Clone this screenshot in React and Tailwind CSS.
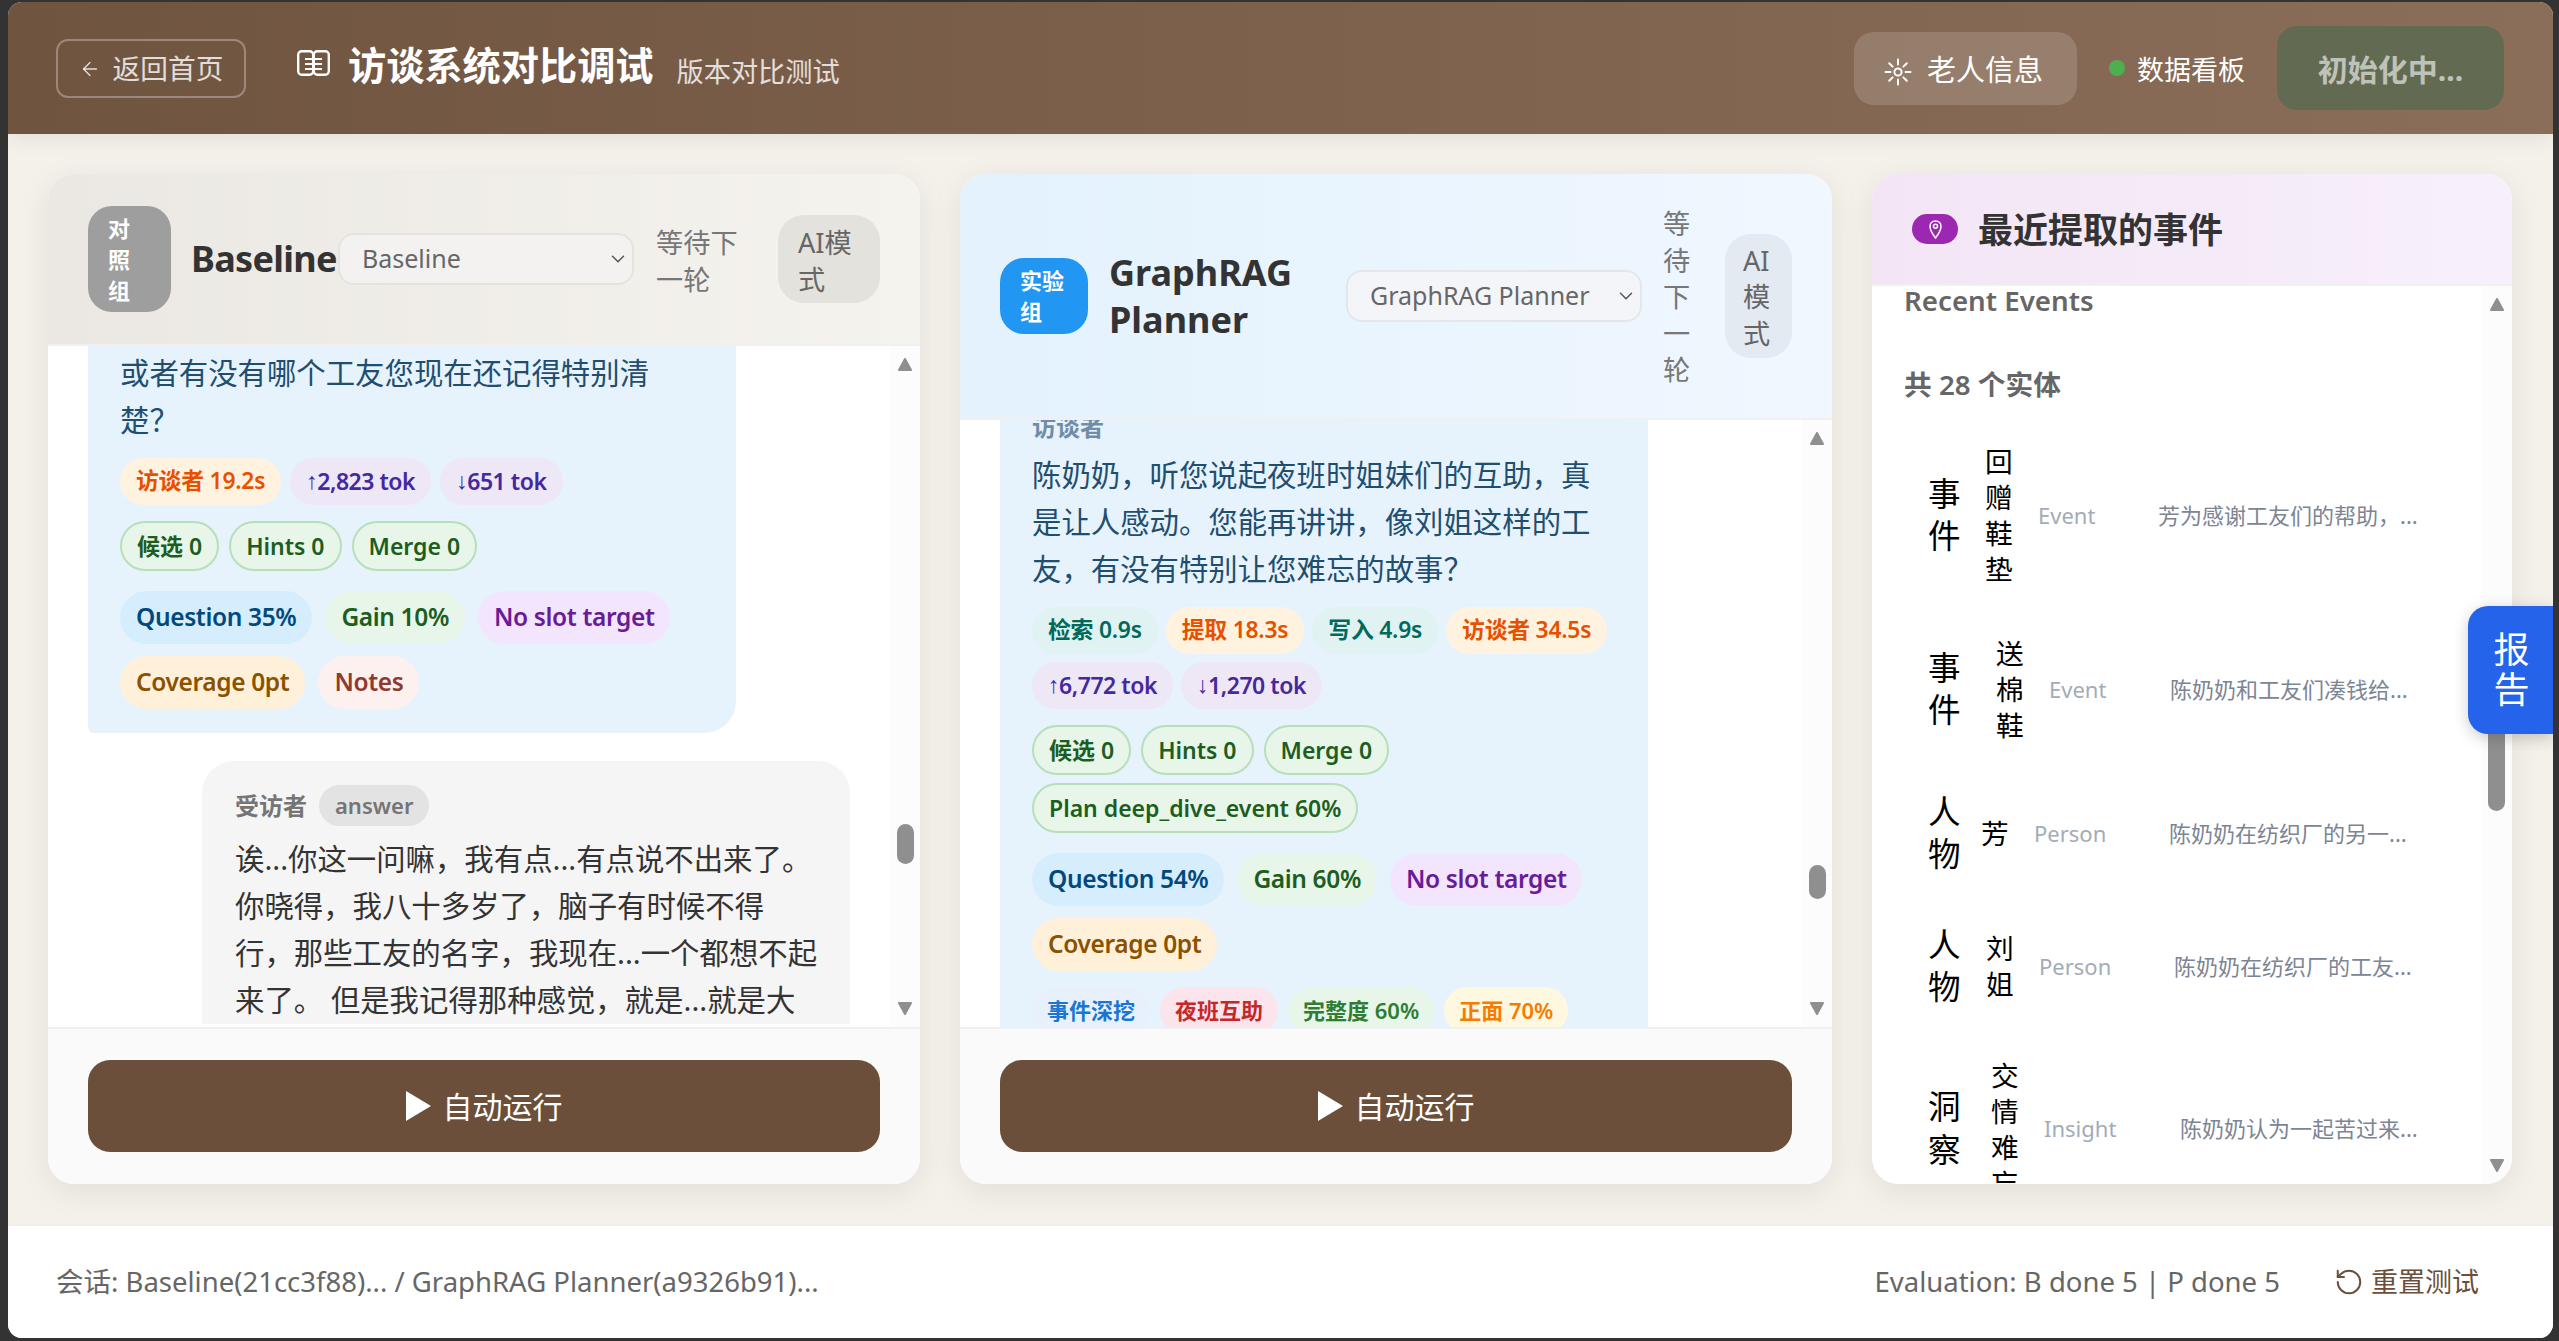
import React from "react";
import { ArrowLeft, ChevronDown, RotateCcw } from "lucide-react";

const chipColors = {
  fetch: "bg-[#e0f2f1] text-[#00695c]",
  extract: "bg-[#fff3e0] text-[#e65100]",
  tok: "bg-[#ede7f6] text-[#4527a0]",
  question: "bg-[#d6edfd] text-[#01497c]",
  gain: "bg-[#e8f5e9] text-[#1b5e20]",
  slot: "bg-[#f3e5fd] text-[#6a1b9a]",
  coverage: "bg-[#fff0d9] text-[#8a5200]",
  notes: "bg-[#fdf1ef] text-[#8f3a2f]",
};

const Chip = ({ color, children }) => (
  <span className={`flex h-[47px] items-center whitespace-nowrap rounded-full px-4 text-[22.85px] font-semibold tracking-[-0.01em] ${color}`}>
    {children}
  </span>
);

const TokChip = ({ arrow, children }) => (
  <span className={`flex h-[47px] items-center whitespace-nowrap rounded-full px-4 text-[23px] font-semibold tracking-[-0.02em] ${chipColors.tok}`}>
    <span className="font-['Liberation_Sans'] font-normal">{arrow}</span>
    {children}
  </span>
);

const HintChip = ({ children }) => (
  <span className="flex h-[50px] items-center whitespace-nowrap rounded-full border-2 border-[#b7dfba] bg-[#e8f5e9] px-[15px] text-[23px] font-semibold text-[#1b5e20]">
    {children}
  </span>
);

const ScoreChip = ({ color, children }) => (
  <span className={`flex h-[53px] items-center whitespace-nowrap rounded-full px-4 text-[24.5px] font-semibold tracking-[-0.015em] ${color}`}>
    {children}
  </span>
);

const TagChip = ({ color, children }) => (
  <span className={`flex h-[47px] items-center whitespace-nowrap rounded-full px-[15px] text-[22px] font-semibold ${color}`}>
    {children}
  </span>
);

const Arrow = ({ down }) => (
  <svg width="16" height="14" viewBox="0 0 16 14" className={down ? "rotate-180" : ""}>
    <path d="M8 1 L14 12 H2 Z" fill="#8f8f8f" stroke="#8f8f8f" strokeWidth="2" strokeLinejoin="round" />
  </svg>
);

// fake scrollbar, native ones don't show in the capture
const Scrollbar = ({ thumbClass }) => (
  <div className="absolute inset-y-0 right-0 w-[30px] bg-[#fcfcfc]">
    <div className="absolute left-[7px] top-[12px]">
      <Arrow />
    </div>
    <div className={`absolute w-[17px] rounded-full bg-[#8f8f8f] ${thumbClass}`} />
    <div className="absolute bottom-[12px] left-[7px]">
      <Arrow down />
    </div>
  </div>
);

const ModelSelect = ({ value, className }) => (
  <div className="relative ml-0.5 shrink-0">
    <select className={`h-[52px] w-[296px] appearance-none rounded-2xl border-2 pl-[22px] text-[25px] text-[#666] ${className}`}>
      <option>{value}</option>
    </select>
    <ChevronDown size={22} strokeWidth={1.6} className="pointer-events-none absolute right-[5px] top-[15px] text-[#555]" />
  </div>
);

const AutoRun = () => (
  <div className="shrink-0 border-t-2 border-[#f0f0f0] bg-[#fafafa] px-10 pb-8 pt-[31px]">
    <button className="flex h-[92px] w-full items-center justify-center gap-3 rounded-[22px] bg-[#6b4f3a] text-[30px] text-white">
      <svg width="25" height="30" viewBox="0 0 25 30">
        <path d="M0 0 L25 15 L0 30 Z" fill="white" />
      </svg>
      自动运行
    </button>
  </div>
);

const BookIcon = () => (
  <svg width="33" height="26" viewBox="0 0 33 26" fill="none" stroke="white" strokeWidth="2.4" className="mb-[10px] ml-[51px] shrink-0">
    <rect x="1.2" y="1.2" width="15" height="23.6" rx="3.5" />
    <rect x="16.8" y="1.2" width="15" height="23.6" rx="3.5" />
    <path d="M8 9h17M8 14h17M8 19h17" strokeWidth="2" />
  </svg>
);

const SunIcon = () => (
  <svg width="28" height="28" viewBox="0 0 28 28" fill="none" stroke="white" strokeWidth="2" strokeLinecap="round" className="mt-[4px]">
    <circle cx="14" cy="14" r="3.6" />
    <path d="M14 1.5v5M14 21.5v5M1.5 14h5M21.5 14h5M5.2 5.2l3.4 3.4M19.4 19.4l3.4 3.4M5.2 22.8l3.4-3.4M19.4 8.6l3.4-3.4" />
  </svg>
);

const PinIcon = () => (
  <svg width="13" height="19" viewBox="0 0 13 19" fill="none" stroke="white" strokeWidth="1.5">
    <path d="M6.5 1C3 1 1 3.5 1 6.4 1 10.5 6.5 18 6.5 18S12 10.5 12 6.4C12 3.5 10 1 6.5 1Z" />
    <circle cx="6.5" cy="6.2" r="2" />
  </svg>
);

const entities = [
  { type: "事件", name: "回赠鞋垫", en: "Event", desc: "芳为感谢工友们的帮助，...", nameGap: "ml-[24px]", enWidth: "w-[120px]" },
  { type: "事件", name: "送棉鞋", en: "Event", desc: "陈奶奶和工友们凑钱给...", nameGap: "ml-[35px]", enWidth: "w-[121px]" },
  { type: "人物", name: "芳", en: "Person", desc: "陈奶奶在纺织厂的另一...", nameGap: "ml-[20px]", enWidth: "w-[135px]" },
  { type: "人物", name: "刘姐", en: "Person", desc: "陈奶奶在纺织厂的工友...", nameGap: "ml-[25px]", enWidth: "w-[135px]" },
  { type: "洞察", name: "交情难忘", en: "Insight", desc: "陈奶奶认为一起苦过来...", nameGap: "ml-[30px]", enWidth: "w-[136px]" },
];

const EntityRow = ({ item }) => (
  <div className="flex items-center py-6 pl-[56px]">
    <div className="w-[33px] shrink-0 text-[32.6px] leading-[42.4px] text-black">{item.type}</div>
    <div className={`w-[28px] shrink-0 text-[27.7px] leading-[36px] text-black ${item.nameGap}`}>{item.name}</div>
    <div className={`ml-[25px] shrink-0 text-[22px] text-[#a3abb8] ${item.enWidth}`}>{item.en}</div>
    <div className="whitespace-nowrap text-[22px] text-[#7c8594]">{item.desc}</div>
  </div>
);

export default function App() {
  return (
    <div className="h-screen w-screen overflow-hidden bg-[#333333] pb-[3px] pl-2 pr-[6px] pt-[2px] font-['Noto_Sans','Noto_Sans_CJK_SC',sans-serif]">
      <div className="relative flex h-full flex-col overflow-hidden rounded-[14px] bg-[#f4f1ea]">
        {/* Top bar */}
        <header className="z-10 flex h-[132px] shrink-0 items-center bg-gradient-to-r from-[#6f5440] to-[#8b6e59] pl-12 pr-[49px] shadow-[0_4px_20px_rgba(0,0,0,0.08)]">
          <button className="flex h-[59px] w-[190px] items-center justify-center gap-3 rounded-xl border-2 border-white/30 pt-[2px] text-[27.7px] text-white/80">
            <ArrowLeft size={22} strokeWidth={1.5} />
            返回首页
          </button>
          <BookIcon />
          <h1 className="mb-[5px] ml-[18px] text-[38.2px] font-bold text-white">访谈系统对比调试</h1>
          <span className="ml-[23px] mt-2 text-[27.2px] text-white/80">版本对比测试</span>
          <div className="ml-auto flex items-center">
            <button className="flex h-[73px] w-[223px] items-center justify-center gap-[15px] rounded-[20px] bg-white/15 pr-1 pt-[4px] text-[29px] text-white">
              <SunIcon />
              老人信息
            </button>
            <span className="ml-8 h-4 w-4 rounded-full bg-[#4caf50]" />
            <span className="ml-3 pt-[4px] text-[27px] text-white">数据看板</span>
            <button className="ml-8 flex h-[84px] w-[227px] items-center justify-center rounded-[20px] bg-[#626b52] pt-[2px] text-[30px] font-bold text-white/60">
              初始化中...
            </button>
          </div>
        </header>

        <main className="grid min-h-0 flex-1 grid-cols-[872px_872px_1fr] gap-10 pb-[41px] pl-10 pr-[41px] pt-10">
          {/* Baseline column */}
          <section className="flex min-h-0 flex-col overflow-hidden rounded-[26px] bg-white shadow-[0_8px_32px_rgba(0,0,0,0.08)]">
            <div className="flex h-[172px] shrink-0 items-center border-b-2 border-[#f0f0f0] bg-gradient-to-r from-[#ebe8e3] to-[#f5f3ee] px-10">
              <div className="flex h-[106px] w-[83px] shrink-0 items-center rounded-[24px] bg-[#9e9e9e] px-5 text-[22px] font-bold leading-[31px] text-white">
                对照组
              </div>
              <h2 className="ml-5 w-[145px] shrink-0 text-[36px] font-bold tracking-[-0.02em] text-[#333]">Baseline</h2>
              <ModelSelect value="Baseline" className="border-[#e6e3df] bg-[#f3f2f0]" />
              <div className="ml-[22px] w-[100px] shrink-0 pt-[3px] text-[27.2px] leading-[37px] text-[#777]">等待下一轮</div>
              <div className="ml-[22px] flex h-[88px] w-[102px] shrink-0 items-center rounded-[26px] bg-[#e4e2dd] px-5 pt-[3px] text-[27.2px] leading-[37px] text-[#666]">
                AI模式
              </div>
            </div>

            <div className="relative min-h-0 flex-1 overflow-hidden">
              <div className="px-10">
                <div className="w-[648px] rounded-bl-md rounded-br-[32px] bg-[#e6f3fc] px-8 pb-6 pt-1">
                  <p className="text-[29.4px] leading-[47px] text-[#1f4e70]">或者有没有哪个工友您现在还记得特别清楚？</p>
                  <div className="mt-[14px] flex flex-wrap gap-x-[9px] gap-y-2">
                    <Chip color={chipColors.extract}>访谈者 19.2s</Chip>
                    <TokChip arrow="↑">2,823 tok</TokChip>
                    <TokChip arrow="↓">651 tok</TokChip>
                  </div>
                  <div className="mt-4 flex flex-wrap gap-x-[10px] gap-y-2">
                    <HintChip>候选 0</HintChip>
                    <HintChip>Hints 0</HintChip>
                    <HintChip>Merge 0</HintChip>
                  </div>
                  <div className="mt-5 flex flex-wrap gap-x-[13px] gap-y-3">
                    <ScoreChip color={chipColors.question}>Question 35%</ScoreChip>
                    <ScoreChip color={chipColors.gain}>Gain 10%</ScoreChip>
                    <ScoreChip color={chipColors.slot}>No slot target</ScoreChip>
                    <ScoreChip color={chipColors.coverage}>Coverage 0pt</ScoreChip>
                    <ScoreChip color={chipColors.notes}>Notes</ScoreChip>
                  </div>
                </div>

                <div className="ml-[114px] mt-7 w-[648px] rounded-t-[32px] bg-[#f5f5f5] pl-[33px] pr-[29px] pt-6">
                  <div className="flex items-center gap-3">
                    <span className="text-[24px] font-semibold text-[#757575]">受访者</span>
                    <span className="flex h-[41px] items-center rounded-full bg-[#e3e3e3] px-4 text-[22px] font-semibold text-[#757575]">answer</span>
                  </div>
                  <p className="mt-[10px] text-[29.4px] leading-[47px] text-[#333]">
                    诶...你这一问嘛，我有点...有点说不出来了。你晓得，我八十多岁了，脑子有时候不得行，那些工友的名字，我现在...一个都想不起来了。 但是我记得那种感觉，就是...就是大
                  </p>
                </div>
              </div>
              <Scrollbar thumbClass="left-[7px] top-[478px] h-[40px]" />
            </div>
            <AutoRun />
          </section>

          {/* GraphRAG column */}
          <section className="flex min-h-0 flex-col overflow-hidden rounded-[26px] bg-white shadow-[0_8px_32px_rgba(0,0,0,0.08)]">
            <div className="flex h-[246px] shrink-0 items-center border-b-2 border-[#f0f0f0] bg-gradient-to-r from-[#e3f2fd] to-[#f0f7ff] px-10">
              <div className="flex h-[76px] w-[88px] shrink-0 items-center rounded-[24px] bg-[#2196f3] px-5 text-[22px] font-bold leading-[31px] text-white">
                实验组
              </div>
              <h2 className="ml-[21px] w-[235px] shrink-0 pr-5 text-[36px] font-bold leading-[47px] text-[#333]">GraphRAG Planner</h2>
              <ModelSelect value="GraphRAG Planner" className="border-[#e4e6ea] bg-[#f3f5f8]" />
              <div className="ml-[21px] w-[39px] shrink-0 pt-[3px] text-[27.2px] leading-[36.5px] text-[#777]">等待下一轮</div>
              <div className="ml-[23px] flex h-[124px] w-[67px] shrink-0 items-center rounded-[26px] bg-[#e3eaf2] px-[18px] pt-[3px] text-[27.2px] leading-[36.5px] text-[#666]">
                AI模式
              </div>
            </div>

            <div className="relative min-h-0 flex-1 overflow-hidden">
              <div className="px-10">
                <div className="-mt-[34px] w-[648px] bg-[#e6f3fc] px-8 pt-6">
                  <div className="text-[24px] font-semibold leading-[34px] text-[#6f8da6]">访谈者</div>
                  <p className="mt-2 text-[29.4px] leading-[47px] text-[#1f4e70]">陈奶奶，听您说起夜班时姐妹们的互助，真是让人感动。您能再讲讲，像刘姐这样的工友，有没有特别让您难忘的故事？</p>
                  <div className="mt-[14px] flex flex-wrap gap-x-2 gap-y-2">
                    <Chip color={chipColors.fetch}>检索 0.9s</Chip>
                    <Chip color={chipColors.extract}>提取 18.3s</Chip>
                    <Chip color={chipColors.fetch}>写入 4.9s</Chip>
                    <Chip color={chipColors.extract}>访谈者 34.5s</Chip>
                    <TokChip arrow="↑">6,772 tok</TokChip>
                    <TokChip arrow="↓">1,270 tok</TokChip>
                  </div>
                  <div className="mt-4 flex flex-wrap gap-x-[10px] gap-y-2">
                    <HintChip>候选 0</HintChip>
                    <HintChip>Hints 0</HintChip>
                    <HintChip>Merge 0</HintChip>
                    <HintChip>Plan deep_dive_event 60%</HintChip>
                  </div>
                  <div className="mt-5 flex flex-wrap gap-x-[13px] gap-y-3">
                    <ScoreChip color={chipColors.question}>Question 54%</ScoreChip>
                    <ScoreChip color={chipColors.gain}>Gain 60%</ScoreChip>
                    <ScoreChip color={chipColors.slot}>No slot target</ScoreChip>
                    <ScoreChip color={chipColors.coverage}>Coverage 0pt</ScoreChip>
                  </div>
                  <div className="mt-4 flex flex-wrap gap-x-[10px]">
                    <TagChip color="bg-[#e8f1fb] text-[#1976d2]">事件深挖</TagChip>
                    <TagChip color="bg-[#fce4ec] text-[#c62828]">夜班互助</TagChip>
                    <TagChip color="bg-[#e8f5e9] text-[#2e7d32]">完整度 60%</TagChip>
                    <TagChip color="bg-[#fff8e1] text-[#f57c00]">正面 70%</TagChip>
                  </div>
                </div>
              </div>
              <Scrollbar thumbClass="left-[7px] top-[445px] h-[34px]" />
            </div>
            <AutoRun />
          </section>

          {/* Recent events column */}
          <section className="flex min-h-0 flex-col overflow-hidden rounded-[26px] bg-white shadow-[0_8px_32px_rgba(0,0,0,0.08)]">
            <div className="flex h-[112px] shrink-0 items-center gap-5 border-b-2 border-[#f0f0f0] bg-gradient-to-r from-[#f3e5f5] to-[#f7f0fb] px-10 pt-[2px]">
              <span className="mb-[2px] flex h-[30px] w-[46px] items-center justify-center rounded-full bg-[#9c27b0]">
                <PinIcon />
              </span>
              <h2 className="text-[35px] font-bold text-[#333]">最近提取的事件</h2>
            </div>
            <div className="relative min-h-0 flex-1 overflow-hidden">
              <div className="-mt-px px-8 text-[27.7px] font-semibold leading-[30px] text-[#666]">Recent Events</div>
              <div className="mt-[53px] px-8 text-[27.7px] font-semibold leading-[32px] text-[#666]">共 28 个实体</div>
              <div className="mt-[19px]">
                {entities.map((item) => (
                  <EntityRow key={item.name} item={item} />
                ))}
              </div>
              <Scrollbar thumbClass="left-[6px] top-[400px] h-[125px]" />
            </div>
          </section>
        </main>

        <footer className="flex h-[113px] shrink-0 items-center justify-between border-t border-[#f0eee9] bg-white pl-12 pr-[74px] text-[27.5px] text-[#666]">
          <span>会话: Baseline(21cc3f88)... / GraphRAG Planner(a9326b91)...</span>
          <div className="flex items-center">
            <span>Evaluation: B done 5 | P done 5</span>
            <button className="ml-[54px] flex items-center gap-[7px] text-[27px] text-[#6b4f3a]">
              <RotateCcw size={30} strokeWidth={1.6} />
              重置测试
            </button>
          </div>
        </footer>

        {/* floating report tab */}
        <div className="absolute right-0 top-[604px] flex h-[128px] w-[85px] items-center justify-center rounded-l-[20px] bg-[#2563eb] pl-1 text-[36px] leading-[40px] text-white shadow-[0_4px_16px_rgba(0,0,0,0.2)]">
          <span className="w-[38px]">报告</span>
        </div>
      </div>
    </div>
  );
}
